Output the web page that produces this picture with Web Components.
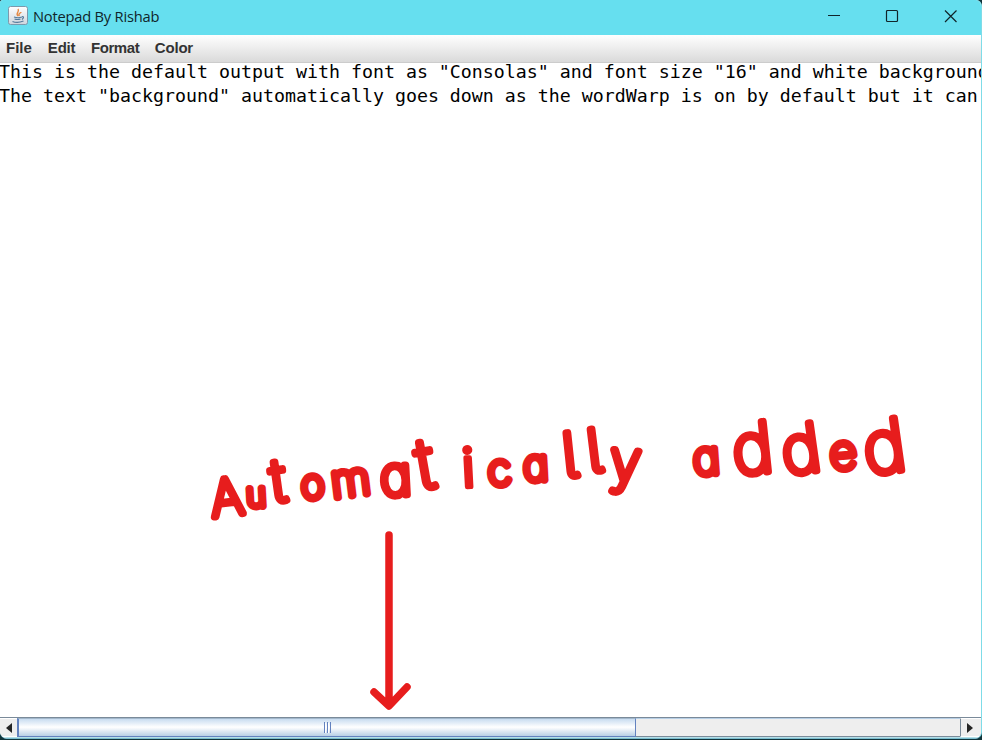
<!DOCTYPE html>
<html lang="en"><head><meta charset="utf-8"><title>Notepad By Rishab</title>
<style>body{margin:0;width:982px;height:740px;overflow:hidden;background:#10343a}</style></head>
<body>
<notepad-window>
<title-bar slot="title">Notepad By Rishab</title-bar>
<menu-bar slot="menu"><menu-item>File</menu-item><menu-item>Edit</menu-item><menu-item>Format</menu-item><menu-item>Color</menu-item></menu-bar>
<text-area slot="text"><div>This is the default output with font as "Consolas" and font size "16" and white background</div><div>The text "background" automatically goes down as the wordWarp is on by default but it can</div></text-area>
<scroll-bar slot="scroll"></scroll-bar>
<marker-note slot="note"></marker-note>
</notepad-window>
<script>
function define(name, html){
  customElements.define(name, class extends HTMLElement{
    constructor(){super();this.attachShadow({mode:'open'}).innerHTML=html;}
  });
}
define('notepad-window',`<style>
:host{display:flex;flex-direction:column;box-sizing:border-box;width:982px;height:739px;position:relative;overflow:hidden;background:#fff;border-right:1px solid #7fdce8;border-bottom:1px solid #79bccf;border-radius:3px 6px 7px 7px}
main{flex:1;min-height:0;overflow:hidden}
</style><slot name="title"></slot><slot name="menu"></slot><main><slot name="text"></slot></main><slot name="scroll"></slot><slot name="note"></slot>`);
define('title-bar',`<style>
:host{display:flex;align-items:center;box-sizing:border-box;height:35px;flex:none;padding-left:8px;background:#66dfef;color:#10262b;font:14.7px/20px "Open Sans","Noto Sans",sans-serif}
span{margin:-3px 0 0 5px;letter-spacing:-.22px;flex:1;white-space:nowrap}svg{display:block;flex:none}
.b{margin-top:-3px}
</style><svg width="20" height="20" viewBox="0 0 20 20" style="margin-top:-3px"><defs><linearGradient id="g" x2="0" y2="1"><stop stop-color="#fff"/><stop offset="1" stop-color="#cfd6de"/></linearGradient></defs><rect x=".5" y=".5" width="19" height="18" rx="2" fill="url(#g)" stroke="#7d99ac"/><path d="M10 10C7 7 12 6 10 3M11.500 10C9.500 8 13 7 13 6" fill="none" stroke="#e58a45" stroke-width="1.400"/><path d="M6 11q4 1.500 8 0M6.500 13q3 1 6 0M14 10.500q3 0 0 3M4.500 15.500q5 2 11-.5" fill="none" stroke="#557b9b" stroke-width="1.200"/></svg><span><slot></slot></span>
<svg class="b" width="154" height="16" viewBox="0 0 154 16" fill="none" stroke="#10252a" stroke-width="1.200"><path d="M1 7.500h12M118 2.500l11.500 11.500M129.500 2.500L118 14"/><rect x="59.500" y="2.500" width="11" height="11" rx="1"/></svg>`);
define('menu-bar',`<style>:host{display:flex;gap:16px;box-sizing:border-box;height:28px;flex:none;padding:4px 6px 0;background:linear-gradient(#fff,#dadada);border-bottom:1px solid #ccc}</style><slot></slot>`);
define('menu-item',`<style>:host{display:block;color:#333;font:bold 15px/17px "Liberation Sans",sans-serif}:host(:nth-child(n+2)){letter-spacing:-.2px}:host(:nth-child(3)){letter-spacing:-.4px}:host(:nth-child(n+3)){margin-left:-.5px}</style><slot></slot>`);
define('text-area',`<style>:host{display:block;margin:-3px 0 0 -1px;color:#000;font:18.270px/24px "DejaVu Sans Mono",monospace;white-space:pre}</style><slot></slot>`);
define('scroll-bar',`<style>
:host{display:grid;grid-template-columns:17px 619px 1fr 21px;box-sizing:border-box;height:21px;flex:none;border-top:1px solid #7a8a99;border-bottom:1px solid #b5dfe6;background:#eee}
div{box-sizing:border-box;display:flex;align-items:center;justify-content:center;border-bottom:1px solid #7a8a99}
.l,.r{border-color:#fff}.l{border-top:1px solid #fff}.r{border-left:1px solid #7a8a99;border-top:1px solid #fff;padding-right:3px}
.thumb{border:1px solid #6382bf;border-left-width:2px;border-top-color:#a3b8cc;background:linear-gradient(#c8dcf0,#fff 48%,#b8cfe5)}
.track{border-top:1px solid #b8cfe5}
svg{display:block}
</style><div class="l"><svg width="6" height="10"><path d="M6 0v10L0 5z" fill="#252525"/></svg></div><div class="thumb"><svg width="8" height="11"><path d="M1.500 0v11M4.500 0v11M7.500 0v11" stroke="#6382bf"/><path d="M2.500 1v10M5.500 1v10" stroke="#fff"/></svg></div><div class="track"></div><div class="r"><svg width="6" height="10"><path d="M0 0v10L6 5z" fill="#252525"/></svg></div>`);
define('marker-note',`<style>
:host{display:block;position:absolute;inset:0;pointer-events:none}
svg{display:block;width:982px;height:739px}
text{font-family:Inter,sans-serif;font-weight:100;font-feature-settings:"cv11","cv05";fill:#e71d1d;stroke:#e71d1d;stroke-width:7.500;stroke-linejoin:round;stroke-linecap:round}
</style><svg viewBox="0 0 982 739">
<text><tspan x="213" y="517" rotate="-7" font-size="50">A</tspan><tspan x="247" y="507" rotate="-3" font-size="33">u</tspan><tspan x="274" y="502" rotate="-8" font-size="58">t</tspan><tspan x="302" y="499" rotate="-4" font-size="40">o</tspan><tspan x="333" y="498" rotate="-7" font-size="45">m</tspan><tspan x="381" y="496" rotate="-3" font-size="54">a</tspan><tspan x="421" y="489" rotate="-10" font-size="68">t</tspan><tspan x="463" y="487" rotate="-3" font-size="53" font-weight="300" stroke-width="5">i</tspan><tspan x="489" y="486" rotate="-5" font-size="43">c</tspan><tspan x="524" y="481" rotate="-3" font-size="43">a</tspan><tspan x="565" y="477" rotate="-6" font-size="60">l</tspan><tspan x="590" y="472" rotate="-7" font-size="58">l</tspan><tspan x="609" y="480" rotate="4" font-size="56">y</tspan></text>
<text><tspan x="694" y="475" rotate="-4" font-size="46">a</tspan><tspan x="735" y="475" rotate="-6" font-size="69">d</tspan><tspan x="785" y="475" rotate="-8" font-size="66">d</tspan><tspan x="831" y="470" rotate="-5" font-size="47">e</tspan><tspan x="867" y="475" rotate="-8" font-size="72">d</tspan></text>
<path d="M389 535V705M374 692L389 706L407 687" fill="none" stroke="#e71d1d" stroke-width="7.500" stroke-linecap="round" stroke-linejoin="round"/></svg>`);
</script></body></html>
